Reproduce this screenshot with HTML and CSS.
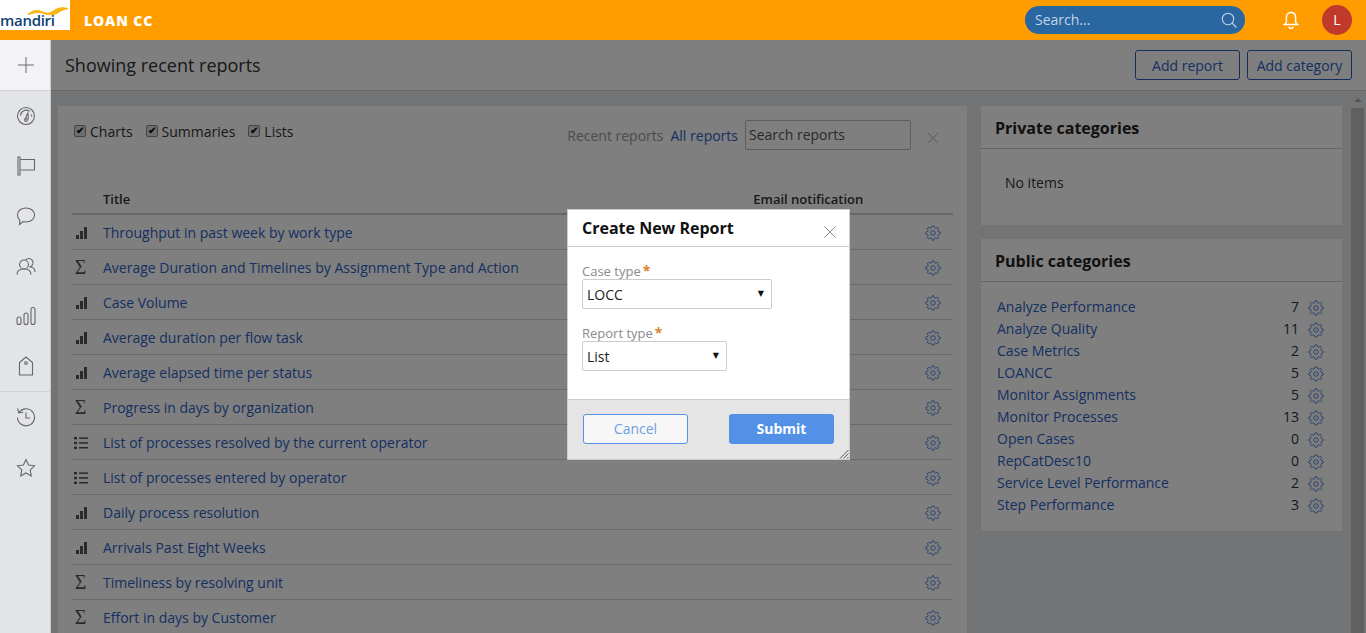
FILE: index.html
```html
<!DOCTYPE html>
<html lang="en">
<head>
  <meta charset="UTF-8" />
  <title>Loan CC - Reports</title>
  <link rel="stylesheet" href="styles.css">
</head>
<body>
  <svg class="sprites" width="0" height="0">
    <symbol id="gear" viewBox="0 0 24 24">
      <circle cx="12" cy="12" r="3.4" />
      <path d="M19.4 15a1.65 1.65 0 0 0 .33 1.82l.06.06a2 2 0 0 1 0 2.83 2 2 0 0 1-2.83 0l-.06-.06a1.65 1.65 0 0 0-1.82-.33 1.65 1.65 0 0 0-1 1.51V21a2 2 0 0 1-2 2 2 2 0 0 1-2-2v-.09A1.65 1.65 0 0 0 9 19.4a1.65 1.65 0 0 0-1.82.33l-.06.06a2 2 0 0 1-2.83 0 2 2 0 0 1 0-2.83l.06-.06a1.65 1.65 0 0 0 .33-1.82 1.65 1.65 0 0 0-1.51-1H3a2 2 0 0 1-2-2 2 2 0 0 1 2-2h.09A1.65 1.65 0 0 0 4.6 9a1.65 1.65 0 0 0-.33-1.82l-.06-.06a2 2 0 0 1 0-2.83 2 2 0 0 1 2.83 0l.06.06a1.65 1.65 0 0 0 1.82.33H9a1.65 1.65 0 0 0 1-1.51V3a2 2 0 0 1 2-2 2 2 0 0 1 2 2v.09a1.65 1.65 0 0 0 1 1.51 1.65 1.65 0 0 0 1.82-.33l.06-.06a2 2 0 0 1 2.83 0 2 2 0 0 1 0 2.83l-.06.06a1.65 1.65 0 0 0-.33 1.82V9a1.65 1.65 0 0 0 1.51 1H21a2 2 0 0 1 2 2 2 2 0 0 1-2 2h-.09a1.65 1.65 0 0 0-1.51 1z" />
    </symbol>
    <symbol id="bars" viewBox="0 0 11 12">
      <rect x="0" y="8" width="3" height="4" />
      <rect x="4" y="4" width="3" height="8" />
      <rect x="8" y="0" width="3" height="12" />
    </symbol>
    <symbol id="list" viewBox="0 0 14 12">
      <rect x="0" y="0" width="3" height="2.4" />
      <rect x="0" y="4.8" width="3" height="2.4" />
      <rect x="0" y="9.6" width="3" height="2.4" />
      <rect x="5" y="0.4" width="9" height="1.5" />
      <rect x="5" y="5.2" width="9" height="1.5" />
      <rect x="5" y="10" width="9" height="1.5" />
    </symbol>
  </svg>

  <!-- Top bar -->
  <header class="topbar">
    <div class="logo">
      <svg class="logo-wave" viewBox="0 0 44 10" width="42" height="11">
        <path d="M1 8c5-4 9-5 14-3s8 3 12 0 7-5 16-3c-6 0-8 3-12 5s-8 2-13 0-9-1-17 1z" />
      </svg>
      <span class="logo-text">mandiri</span>
    </div>
    <div class="app-name">LOAN CC</div>
    <div class="search">
      <span>Search...</span>
      <svg viewBox="0 0 16 16" width="16" height="16"><circle cx="7" cy="7" r="5.7" /><path d="M11 11l4.500 4.500" /></svg>
    </div>
    <svg class="bell" viewBox="0 0 16 18" width="16" height="18">
      <path d="M8 1.500c-3 0-4.600 2.300-4.600 5v4c0 1.400-.8 2.300-2 3h13.200c-1.200-.7-2-1.600-2-3v-4c0-2.700-1.600-5-4.600-5z" />
      <path d="M6 15.500a2 2 0 0 0 4 0" />
    </svg>
    <div class="avatar">L</div>
  </header>

  <div class="layout">
    <!-- Left icon rail -->
    <nav class="rail">
      <div class="rail-add">
        <svg viewBox="0 0 16 16" width="16" height="16"><path d="M8 0v16M0 8h16" /></svg>
      </div>
      <div class="rail-group">
        <svg viewBox="0 0 20 20"><circle cx="10" cy="10" r="8.500" /><path d="M4.500 9.500a5.500 5.500 0 0 1 9-4M15.500 8.500a5.500 5.500 0 0 1 .2 2" /><path d="M9 13.500l3-7 .3 7" /><circle cx="10" cy="14" r="1.400" /></svg>
        <svg viewBox="0 0 20 20"><path d="M2 1h2v18H2zM4 3.500h14.500v10.500H4" /></svg>
        <svg viewBox="0 0 20 20"><path d="M10 2c5 0 8.500 3 8.500 7s-3.500 7-8.500 7c-1 0-2-.1-2.800-.4L3.500 18.500l.4-4C2.500 13 1.500 11.200 1.500 9c0-4 3.500-7 8.500-7z" /></svg>
        <svg viewBox="0 0 20 20"><circle cx="8" cy="8.500" r="4.500" /><path d="M1 18.500c0-3.500 2.500-5.500 7-5.500s7 2 7 5.500" /><path d="M9.500 4a4.300 4.300 0 1 1 4 7c3.500 0 5.500 2 5.500 5" /></svg>
        <svg viewBox="0 0 20 20"><rect x="1" y="11" width="4" height="7.500" rx="2" /><rect x="8" y="7" width="4" height="11.500" rx="2" /><rect x="15" y="1.500" width="4" height="17" rx="2" /></svg>
        <svg viewBox="0 0 20 20"><path d="M3.500 6.500L10 1l6.500 5.500v12.500h-13z" /><circle cx="10" cy="7" r="1.300" /></svg>
      </div>
      <div class="rail-group rail-group-last">
        <svg viewBox="0 0 20 20"><path d="M3 5.500a8.500 8.500 0 1 1-1.500 5" /><path d="M1.500 1.500l1.300 4.300 4.400-.6" /><path d="M10 5.500v5.500h4" /></svg>
        <svg viewBox="0 0 20 20"><path d="M10 1.500l2.600 5.500 5.900.8-4.300 4.100 1.100 6-5.300-2.900-5.300 2.900 1.100-6L1.500 7.800l5.900-.8z" /></svg>
      </div>
    </nav>

    <main class="main">
      <div class="page-head">
        <h1>Showing recent reports</h1>
        <div class="head-actions">
          <button class="btn-outline">Add report</button>
          <button class="btn-outline">Add category</button>
        </div>
      </div>

      <div class="content">
        <section class="card reports">
          <div class="filters">
            <label><input type="checkbox" checked /> Charts</label>
            <label><input type="checkbox" checked /> Summaries</label>
            <label><input type="checkbox" checked /> Lists</label>
            <div class="filters-right">
              <span class="muted">Recent reports</span>
              <a class="link" href="#">All reports</a>
              <input class="search-reports" type="text" placeholder="Search reports" />
              <svg class="clear-x" viewBox="0 0 12 12" width="12" height="12"><path d="M1 1l10 10M11 1L1 11" /></svg>
            </div>
          </div>

          <div class="table-head">
            <span class="th-title">Title</span>
            <span class="th-email">Email notification</span>
          </div>

          <div class="row"><svg class="type-bars"><use href="#bars" /></svg><a class="link" href="#">Throughput in past week by work type</a><svg class="gear"><use href="#gear" /></svg></div>
          <div class="row"><span class="sigma">Σ</span><a class="link" href="#">Average Duration and Timelines by Assignment Type and Action</a><svg class="gear"><use href="#gear" /></svg></div>
          <div class="row"><svg class="type-bars"><use href="#bars" /></svg><a class="link" href="#">Case Volume</a><svg class="gear"><use href="#gear" /></svg></div>
          <div class="row"><svg class="type-bars"><use href="#bars" /></svg><a class="link" href="#">Average duration per flow task</a><svg class="gear"><use href="#gear" /></svg></div>
          <div class="row"><svg class="type-bars"><use href="#bars" /></svg><a class="link" href="#">Average elapsed time per status</a><svg class="gear"><use href="#gear" /></svg></div>
          <div class="row"><span class="sigma">Σ</span><a class="link" href="#">Progress in days by organization</a><svg class="gear"><use href="#gear" /></svg></div>
          <div class="row"><svg class="type-list"><use href="#list" /></svg><a class="link" href="#">List of processes resolved by the current operator</a><svg class="gear"><use href="#gear" /></svg></div>
          <div class="row"><svg class="type-list"><use href="#list" /></svg><a class="link" href="#">List of processes entered by operator</a><svg class="gear"><use href="#gear" /></svg></div>
          <div class="row"><svg class="type-bars"><use href="#bars" /></svg><a class="link" href="#">Daily process resolution</a><svg class="gear"><use href="#gear" /></svg></div>
          <div class="row"><svg class="type-bars"><use href="#bars" /></svg><a class="link" href="#">Arrivals Past Eight Weeks</a><svg class="gear"><use href="#gear" /></svg></div>
          <div class="row"><span class="sigma">Σ</span><a class="link" href="#">Timeliness by resolving unit</a><svg class="gear"><use href="#gear" /></svg></div>
          <div class="row"><span class="sigma">Σ</span><a class="link" href="#">Effort in days by Customer</a><svg class="gear"><use href="#gear" /></svg></div>
        </section>

        <aside class="side">
          <section class="card side-card">
            <h2>Private categories</h2>
            <p class="no-items">No items</p>
          </section>
          <section class="card side-card">
            <h2>Public categories</h2>
            <ul class="cat-list">
              <li><a class="link" href="#">Analyze Performance</a><span class="count">7</span><svg class="gear"><use href="#gear" /></svg></li>
              <li><a class="link" href="#">Analyze Quality</a><span class="count">11</span><svg class="gear"><use href="#gear" /></svg></li>
              <li><a class="link" href="#">Case Metrics</a><span class="count">2</span><svg class="gear"><use href="#gear" /></svg></li>
              <li><a class="link" href="#">LOANCC</a><span class="count">5</span><svg class="gear"><use href="#gear" /></svg></li>
              <li><a class="link" href="#">Monitor Assignments</a><span class="count">5</span><svg class="gear"><use href="#gear" /></svg></li>
              <li><a class="link" href="#">Monitor Processes</a><span class="count">13</span><svg class="gear"><use href="#gear" /></svg></li>
              <li><a class="link" href="#">Open Cases</a><span class="count">0</span><svg class="gear"><use href="#gear" /></svg></li>
              <li><a class="link" href="#">RepCatDesc10</a><span class="count">0</span><svg class="gear"><use href="#gear" /></svg></li>
              <li><a class="link" href="#">Service Level Performance</a><span class="count">2</span><svg class="gear"><use href="#gear" /></svg></li>
              <li><a class="link" href="#">Step Performance</a><span class="count">3</span><svg class="gear"><use href="#gear" /></svg></li>
            </ul>
          </section>
        </aside>

        <div class="scrollbar">
          <span class="scroll-up"></span>
          <span class="scroll-thumb"></span>
        </div>
      </div>
    </main>
  </div>

  <!-- Modal mask covers the work area only, rail and top bar stay bright -->
  <div class="mask"></div>

  <div class="modal">
    <div class="modal-head">
      <span>Create New Report</span>
      <svg viewBox="0 0 12 12" width="12" height="12"><path d="M.5.5l11 11M11.500.5l-11 11" /></svg>
    </div>
    <div class="modal-body">
      <div class="field">
        <label>Case type<em>*</em></label>
        <div class="select select-wide"><span>LOCC</span></div>
      </div>
      <div class="field">
        <label>Report type<em>*</em></label>
        <div class="select select-narrow"><span>List</span></div>
      </div>
    </div>
    <div class="modal-foot">
      <button class="btn-cancel">Cancel</button>
      <button class="btn-submit">Submit</button>
      <svg class="grip" viewBox="0 0 10 10" width="10" height="10"><path d="M9.500 1L1 9.500M9.500 4.500L4.500 9.500M9.500 8L8 9.500" /></svg>
    </div>
  </div>
</body>
</html>
```

FILE: styles.css
```css
* {
  box-sizing: border-box;
}

html, body {
  height: 633px;
  overflow: hidden;
}

body {
  margin: 0;
  font-family: "Open Sans", "Liberation Sans", sans-serif;
  font-size: 14px;
  color: #333;
  background: #e6e8ea;
}

.sprites {
  position: absolute;
}

.link {
  color: #2b60c4;
  text-decoration: none;
}

/* ---------- top bar ---------- */
.topbar {
  position: relative;
  z-index: 5;
  height: 40px;
  display: flex;
  align-items: center;
  background: #ff9d00;
}

.logo {
  width: 70px;
  height: 30px;
  align-self: flex-start;
  background: #fff;
  overflow: hidden;
  position: relative;
}

.logo-wave {
  position: absolute;
  left: 27px;
  top: 6px;
}

.logo-wave path {
  fill: #f9b513;
  stroke: #f9b513;
  stroke-width: 1.2;
}

.logo-text {
  position: absolute;
  left: 0;
  top: 11px;
  font-size: 15px;
  line-height: 18px;
  font-weight: 600;
  letter-spacing: -0.3px;
  color: #0f3f73;
}

.app-name {
  margin-left: 14px;
  font-size: 14px;
  font-weight: 800;
  letter-spacing: 0.9px;
  color: #fff;
}

.search {
  margin-left: auto;
  width: 220px;
  height: 28px;
  padding: 0 8px 1px 10px;
  display: flex;
  align-items: center;
  justify-content: space-between;
  border-radius: 14px;
  background: #2a66a0;
  color: #c3d5e6;
}

.search svg {
  fill: none;
  stroke: #c3d5e6;
  stroke-width: 1.1;
}

.bell {
  margin-left: 38px;
  fill: none;
  stroke: #fff;
  stroke-width: 1.4;
}

.avatar {
  width: 30px;
  height: 30px;
  margin: 0 14px 0 23px;
  border-radius: 50%;
  background: #c0392b;
  color: #fff;
  font-size: 14px;
  line-height: 30px;
  text-align: center;
}

/* ---------- rail ---------- */
.layout {
  display: flex;
  height: 593px;
}

.rail {
  position: relative;
  z-index: 5;
  flex: 0 0 51px;
  background: #e3e4e6;
  border-right: 1px solid #c9cacc;
}

.rail-add {
  height: 51px;
  padding-left: 2px;
  display: flex;
  align-items: center;
  justify-content: center;
  background: #f3f3f5;
  border-bottom: 1px solid #d2d3d5;
}

.rail-add svg {
  fill: none;
  stroke: #6d6872;
  stroke-width: 1;
}

.rail-group {
  display: flex;
  flex-direction: column;
  align-items: center;
  gap: 30px;
  padding: 15px 0 15px 2px;
  border-bottom: 1px solid #d2d3d5;
}

.rail-group-last {
  border-bottom: none;
  padding-top: 15px;
  gap: 31px;
}

.rail-group svg {
  width: 20px;
  height: 20px;
  fill: none;
  stroke: #66666f;
  stroke-width: 1.1;
}

/* ---------- main ---------- */
.main {
  flex: 1;
  min-width: 0;
}

.page-head {
  height: 51px;
  padding: 0 14px;
  display: flex;
  align-items: center;
  justify-content: space-between;
  background: #fff;
  border-bottom: 1px solid #ccc;
}

.page-head h1 {
  margin: 0;
  font-size: 18px;
  font-weight: 400;
  color: #333;
}

.head-actions {
  display: flex;
  gap: 7px;
}

.btn-outline {
  width: 105px;
  height: 30px;
  padding: 0;
  border: 1px solid #2b5fb8;
  border-radius: 3px;
  background: #fff;
  color: #2b60c4;
  font: inherit;
}

.content {
  display: flex;
  align-items: flex-start;
  padding: 15px 0 0 7px;
  height: 542px;
  position: relative;
}

.card {
  background: #fff;
}

/* ---------- reports ---------- */
.reports {
  width: 909px;
  height: 540px;
  padding: 14px 14px 0;
}

.filters {
  display: flex;
  align-items: flex-start;
  height: 66px;
  padding-left: 2px;
}

.filters label {
  display: flex;
  align-items: center;
  gap: 4px;
  margin-right: 13px;
  padding-top: 1px;
  line-height: 22px;
}

.filters input[type="checkbox"] {
  appearance: none;
  width: 12px;
  height: 12px;
  margin: -2px 0 0;
  border: 1px solid #888;
  border-radius: 2px;
  background: #ddd;
  position: relative;
}

.filters input[type="checkbox"]::after {
  content: "✔";
  position: absolute;
  left: 1px;
  top: -2px;
  font-size: 10px;
  font-weight: 700;
  line-height: 14px;
  color: #111;
}

.filters-right {
  margin-left: auto;
  display: flex;
  align-items: center;
  height: 30px;
}

.muted {
  color: #999;
  margin-right: 7px;
}

.search-reports {
  width: 166px;
  height: 30px;
  margin: 0 16px 0 7px;
  padding: 0 4px 2px 3px;
  border: 1px solid #bbb;
  border-radius: 2px;
  background: #fff;
  font: inherit;
}

.search-reports::placeholder {
  color: #555;
}

.clear-x {
  margin: 6px 14px 0 0;
  fill: none;
  stroke: #d0d0d0;
  stroke-width: 1.2;
}

.table-head {
  display: flex;
  align-items: center;
  height: 29px;
  padding: 0 0 1px 31px;
  border-bottom: 2px solid #ccc;
  font-size: 13px;
  font-weight: 600;
  color: #333;
}

.th-email {
  margin-left: 623px;
}

.row {
  display: flex;
  align-items: center;
  height: 35px;
  border-bottom: 1px solid #d4d4d4;
  position: relative;
}

.type-bars {
  width: 11px;
  height: 12px;
  margin: 1px 16px 0 4px;
  fill: #555;
  flex: none;
}

.type-list {
  width: 14px;
  height: 12px;
  margin: 1px 15px 0 2px;
  fill: #555;
  flex: none;
}

.sigma {
  width: 13px;
  margin: 0 16px 0 2px;
  font-family: "Liberation Serif", serif;
  font-size: 20px;
  line-height: 16px;
  text-align: center;
  color: #555;
  flex: none;
}

.gear {
  width: 16px;
  height: 16px;
  fill: none;
  stroke: #4a80d8;
  stroke-width: 1.4;
  flex: none;
}

.row .gear {
  margin: 2px 12px 0 auto;
}

/* ---------- right column ---------- */
.side {
  width: 361px;
  margin-left: 14px;
  display: flex;
  flex-direction: column;
  gap: 14px;
}

.side-card h2 {
  margin: 0;
  height: 43px;
  padding: 0 14px;
  font-size: 16px;
  font-weight: 700;
  line-height: 45px;
  color: #222;
  border-bottom: 1px solid #ccc;
}

.side-card:first-child {
  height: 119px;
}

.side-card:last-child {
  height: 292px;
}

.no-items {
  margin: 24px 0 0 24px;
  line-height: 20px;
}

.cat-list {
  list-style: none;
  margin: 13px 0 0;
  padding: 0 18px 0 16px;
}

.cat-list li {
  display: flex;
  align-items: center;
  height: 22px;
}

.cat-list .gear {
  margin-top: 4px;
}

.count {
  margin-left: auto;
  margin-right: 9px;
}

.scrollbar {
  position: absolute;
  top: 0;
  right: 2px;
  bottom: 0;
  width: 13px;
  display: flex;
  flex-direction: column;
  align-items: center;
}

.scroll-up {
  margin-top: 7px;
  width: 0;
  height: 0;
  border: 4px solid transparent;
  border-top: none;
  border-bottom: 4px solid #aaa;
}

.scroll-thumb {
  margin-top: 6px;
  width: 13px;
  flex: 1;
  background: #c0c0c0;
}

/* ---------- modal ---------- */
.mask {
  position: fixed;
  left: 51px;
  top: 40px;
  right: 0;
  bottom: 0;
  z-index: 10;
  background: rgba(0, 0, 0, 0.5);
}

.modal {
  position: fixed;
  left: 567px;
  top: 209px;
  z-index: 11;
  width: 283px;
  height: 251px;
  display: flex;
  flex-direction: column;
  background: #fff;
  border: 1px solid #ccc;
}

.modal-head {
  height: 37px;
  padding: 0 13px 0 14px;
  display: flex;
  align-items: center;
  justify-content: space-between;
  border-bottom: 1px solid #ccc;
  font-size: 16px;
  font-weight: 700;
  color: #111;
}

.modal-head svg {
  margin-top: 7px;
  fill: none;
  stroke: #8a8a8a;
  stroke-width: 1;
}

.modal-body {
  flex: 1;
  padding: 15px 14px 0;
}

.field {
  margin-bottom: 15px;
}

.field label {
  display: block;
  height: 17px;
  font-size: 13px;
  line-height: 17px;
  color: #8a8a8a;
}

.field em {
  margin-left: 2px;
  font-style: normal;
  font-weight: 700;
  font-size: 14px;
  color: #d9822b;
}

.select {
  height: 30px;
  padding: 0 4px;
  display: flex;
  align-items: center;
  justify-content: space-between;
  border: 1px solid #ccc;
  border-radius: 2px;
  color: #222;
}

.select::after {
  content: "▼";
  margin: -2px 3px 0 0;
  font-family: "DejaVu Sans", sans-serif;
  font-size: 8px;
  color: #111;
}

.select-wide {
  width: 190px;
}

.select-narrow {
  width: 145px;
}

.modal-foot {
  height: 60px;
  flex: none;
  padding: 0 15px 2px;
  display: flex;
  align-items: center;
  justify-content: space-between;
  background: #e5e5e5;
  border-top: 1px solid #ccc;
  position: relative;
}

.btn-cancel, .btn-submit {
  width: 105px;
  height: 30px;
  padding: 0;
  border-radius: 3px;
  font: inherit;
}

.btn-cancel {
  border: 1px solid #5591e6;
  background: #f7f7f7;
  color: #6f9fe0;
}

.btn-submit {
  border: none;
  background: #5391e6;
  color: #fff;
  font-weight: 700;
}

.grip {
  position: absolute;
  right: 0;
  bottom: 0;
  fill: none;
  stroke: #444;
  stroke-width: 0.9;
}
```
